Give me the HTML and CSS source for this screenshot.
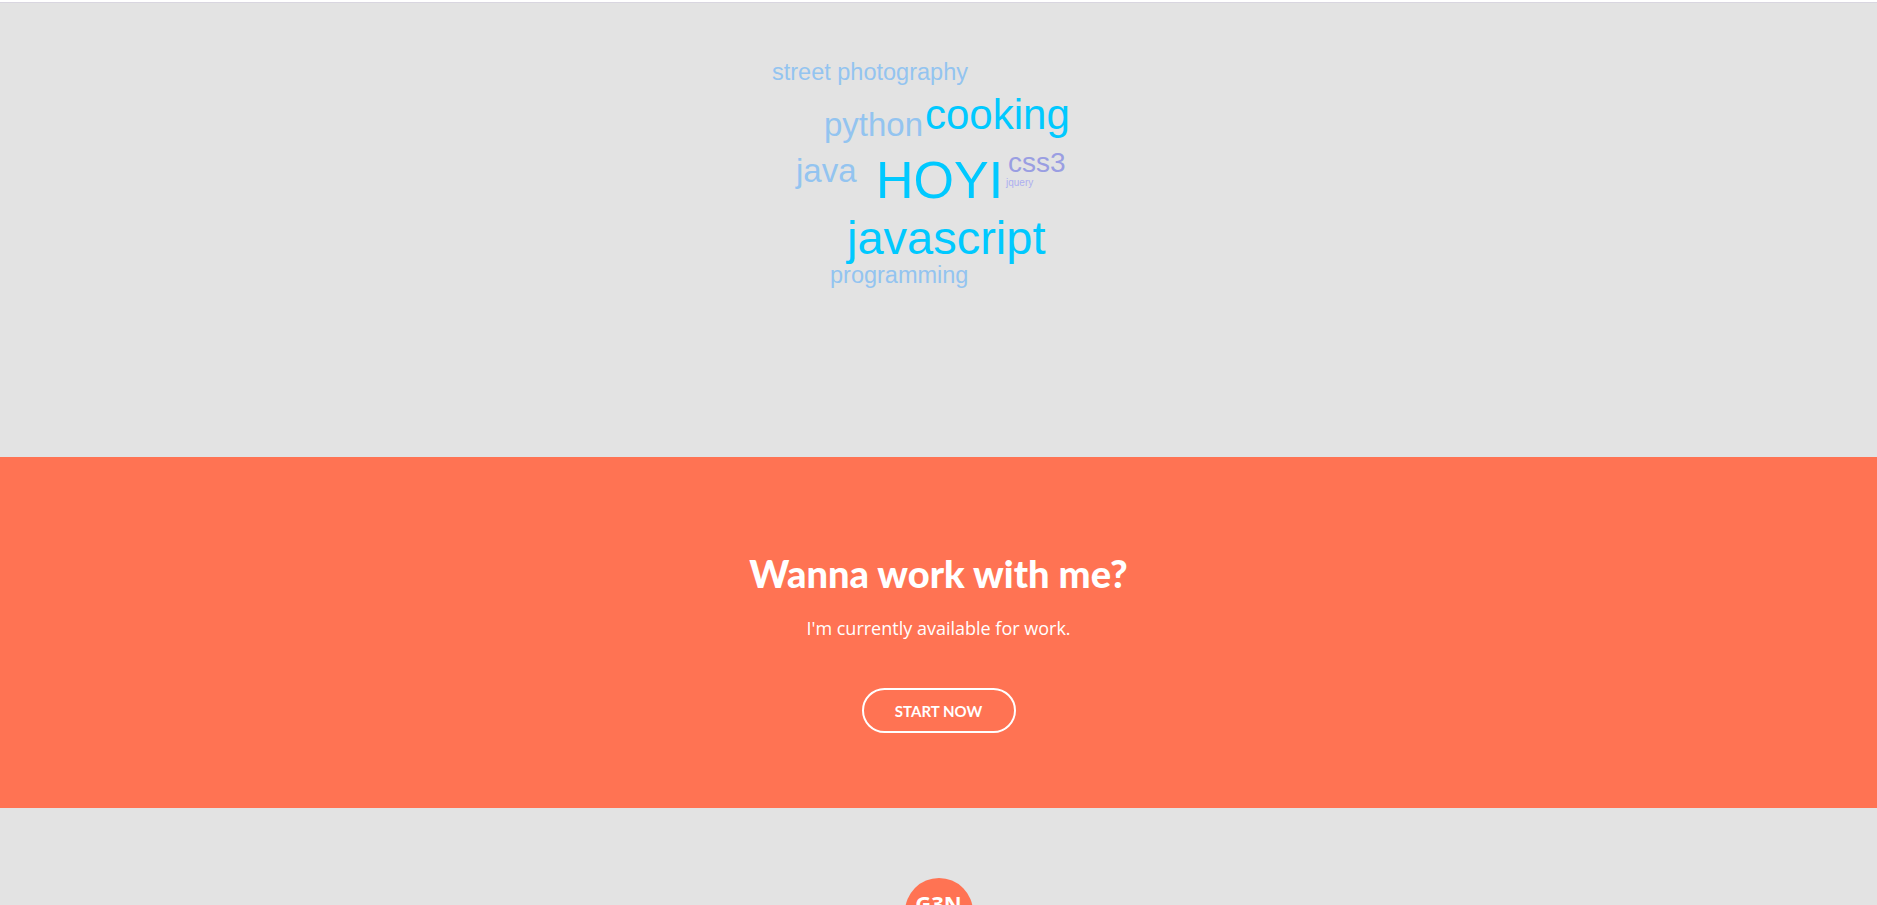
FILE: index.html
```html
<!DOCTYPE html>
<html lang="en">
<head>
<meta charset="utf-8">
<title>Portfolio</title>
<link rel="stylesheet" href="styles.css">
</head>
<body>
<div class="topline"></div>
<section class="cloud">
  <div class="cloud-canvas">
    <span class="w w-street">street photography</span>
    <span class="w w-python">python</span>
    <span class="w w-cooking">cooking</span>
    <span class="w w-java">java</span>
    <span class="w w-hoyi">HOYI</span>
    <span class="w w-css3">css3</span>
    <span class="w w-jquery">jquery</span>
    <span class="w w-javascript">javascript</span>
    <span class="w w-programming">programming</span>
  </div>
</section>
<section class="cta">
  <h2 class="cta-title">Wanna work with me?</h2>
  <p class="cta-text">I'm currently available for work.</p>
  <a class="cta-btn" href="#">START NOW</a>
</section>
<footer class="footer">
  <div class="logo">G3N</div>
</footer>
</body>
</html>
```
FILE: styles.css
```css
html, body {
  margin: 0;
  padding: 0;
}
body {
  background: #e3e3e3;
  font-family: "Liberation Sans", Arial, sans-serif;
  overflow: hidden;
  height: 905px;
}
.topline {
  height: 2px;
  background: #ffffff;
  border-bottom: 1px solid #d9d6e0;
}
.cloud {
  height: 454px;
}
.cloud-canvas {
  position: relative;
  height: 100%;
}
.w {
  position: absolute;
  white-space: nowrap;
  line-height: normal;
  font-family: "Liberation Sans", Arial, sans-serif;
}
.w-street { left: 772px; top: 56px; font-size: 23.5px; color: #93c4f0; }
.w-python { left: 824px; top: 103px; font-size: 33px; color: #93c4f0; }
.w-cooking { left: 925px; top: 88px; font-size: 42px; color: #00c9ff; }
.w-java { left: 796px; top: 149px; font-size: 33px; color: #93c4f0; }
.w-hoyi { left: 876px; top: 147px; font-size: 52px; color: #00c9ff; }
.w-css3 { left: 1008px; top: 144px; font-size: 28px; color: #9a9ee2; }
.w-jquery { left: 1006px; top: 174px; font-size: 10px; color: #adaff0; }
.w-javascript { left: 847px; top: 207px; font-size: 47px; color: #00c9ff; }
.w-programming { left: 830px; top: 259px; font-size: 23.5px; color: #93c4f0; }

.cta {
  height: 351px;
  background: #ff7353;
  display: flex;
  flex-direction: column;
  align-items: center;
  box-sizing: border-box;
  padding-top: 93px;
  color: #ffffff;
}
.cta-title {
  margin: 0;
  font-family: Lato, sans-serif;
  font-weight: 900;
  font-size: 38px;
  line-height: 46px;
}
.cta-text {
  margin: 20px 0 0;
  font-family: "Open Sans", sans-serif;
  font-size: 18px;
  line-height: 24px;
}
.cta-btn {
  margin-top: 48px;
  box-sizing: border-box;
  width: 154px;
  height: 45px;
  border: 2px solid #ffffff;
  border-radius: 23px;
  display: flex;
  align-items: center;
  justify-content: center;
  color: #ffffff;
  text-decoration: none;
  font-family: Lato, sans-serif;
  font-weight: 700;
  font-size: 15px;
}
.footer {
  display: flex;
  justify-content: center;
  padding-top: 70px;
}
.logo {
  width: 68px;
  height: 68px;
  border-radius: 50%;
  background: #ff7353;
  color: #ffffff;
  font-family: "Open Sans", sans-serif;
  font-weight: 700;
  font-size: 22px;
  display: flex;
  justify-content: center;
  padding-top: 14px;
  box-sizing: border-box;
  line-height: 1;
}
```
